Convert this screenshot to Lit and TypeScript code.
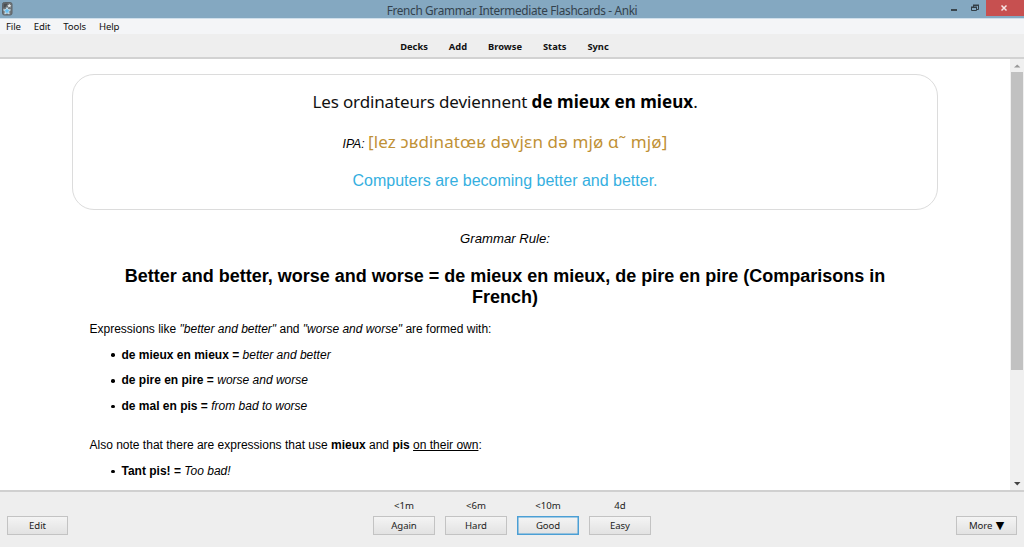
import { LitElement, html, css } from "lit";
import { customElement, property } from "lit/decorators.js";
import { classMap } from "lit/directives/class-map.js";

@customElement("window-titlebar")
class WindowTitlebar extends LitElement {
  static styles = css`
    :host { display: grid; grid-template-columns: 1fr auto 1fr; height: 18px; background: #84a8c1; border-bottom: 1px solid #cfdfeb; align-items: start; }
    .icon { margin: 2px 0 0 2px; display: block; }
    .title { font: 11.800px/20px "Noto Sans", sans-serif; color: #33424d; white-space: nowrap; letter-spacing: -0.330px; }
    .controls { display: flex; justify-content: flex-end; height: 16px; }
    .controls svg { display: block; }
    .close { background: #c75050; width: 38px; height: 16px; }
  `;
  render() {
    return html`
      <svg class="icon" width="11" height="14" viewBox="0 0 11 14">
        <rect x=".5" y=".5" width="9.500" height="12.500" rx="1.800" fill="#70767a" stroke="#5c6368"/>
        <path d="M1.500 1.500h4.500L3.500 5 1.500 6z" fill="#4a4f53"/>
        <path d="M7.300 1.700l.7 1.200 1.400.2-1 1 .2 1.300-1.300-.6-1.200.6.200-1.300-1-1 1.400-.2z" fill="#e1e5e7"/>
        <path d="M5 5.500l1.100 2.100 2.400.3-1.800 1.700.5 2.400L5 10.900 2.800 12l.5-2.400-1.800-1.700 2.400-.3z" fill="#66bdf0" stroke="#dbe8ef" stroke-width=".8"/>
      </svg>
      <span class="title">French Grammar Intermediate Flashcards - Anki</span>
      <div class="controls">
        <svg width="56" height="16" viewBox="0 0 56 16">
          <rect x="21" y="9" width="6" height="2" fill="#3a464e"/>
          <path d="M43.500 7V5.500h5v4H47" fill="none" stroke="#333f47"/>
          <path d="M41.500 7.500h5v3h-5z" fill="#84a8c1" stroke="#333f47"/>
          <path d="M41 7.300h6M43 5.300h6" stroke="#333f47" stroke-width="1.500"/>
        </svg>
        <div class="close">
          <svg width="38" height="16" viewBox="0 0 38 16"><path d="M15.500 5.500l5 5M20.500 5.500l-5 5" stroke="#f6e4e4" stroke-width="1.500"/></svg>
        </div>
      </div>`;
  }
}

@customElement("answer-button")
class AnswerButton extends LitElement {
  @property() label = "";
  @property() due = "";
  @property({ type: Boolean }) primary = false;
  @property({ type: Boolean }) arrow = false;
  static styles = css`
    :host { display: flex; flex-direction: column; width: 62px; font: 9.600px/14px "Noto Sans", sans-serif; color: #222; text-align: center; }
    .due { height: 17px; white-space: pre; }
    .button { box-sizing: border-box; width: 100%; height: 19px; border: 1px solid #c3c3c3; background: linear-gradient(#f4f4f4, #e2e2e2); font: inherit; line-height: 17px; padding: 0; color: inherit; letter-spacing: -0.100px; white-space: nowrap; }
    .primary { border-color: #4b9fd5; box-shadow: inset 0 0 0 0.500px #4b9fd5; }
    .arrow { font: 11px/12px "DejaVu Sans", sans-serif; color: #000; margin-left: 1px; }
  `;
  render() {
    return html`<span class="due">${this.due}</span>
      <button class=${classMap({ button: true, primary: this.primary })}>${this.label}${this.arrow ? html` <span class="arrow">▼</span>` : ""}</button>`;
  }
}

@customElement("app-root")
class AppRoot extends LitElement {
  static styles = css`
    :host { display: flex; flex-direction: column; width: 1024px; height: 547px; background: #fff; overflow: hidden; }
    .menu { display: flex; height: 15px; background: #f4f5f7; font: 9.600px/16px "Noto Sans", sans-serif; color: #111; padding-left: 6px; letter-spacing: -0.150px; }
    .menu span { margin-right: 13px; }
    .toolbar { display: flex; justify-content: center; box-sizing: border-box; height: 25px; background: #eee; border-bottom: 2px solid #d2d2d2; font: bold 9.300px/26px "Noto Sans", sans-serif; color: #111; gap: 21px; padding-right: 15px; }
    .body { display: flex; flex: 1; min-height: 0; }
    .page { flex: 1; overflow: hidden; font-family: "Liberation Sans", Arial, sans-serif; color: #000; }
    .scroll { width: 14px; background: #f0f0f0; display: flex; flex-direction: column; align-items: center; justify-content: space-between; }
    .scroll svg { display: block; flex: none; }
    .thumb { width: 12px; height: 298px; background: #c1c1c1; margin-bottom: auto; }
    .card { box-sizing: border-box; width: 866px; height: 136px; margin: 15px 0 0 72px; border: 1px solid #dcdcdc; border-radius: 22px; text-align: center; white-space: nowrap; }
    .card div { display: flex; justify-content: center; align-items: baseline; }
    .french { font: 17px/24px "Noto Sans", sans-serif; margin-top: 15px; white-space: pre; letter-spacing: -0.130px; color: #111; }
    .french b { letter-spacing: 0.050px; color: #000; }
    .ipa { font: 17px/24px "Noto Sans", sans-serif; margin-top: 16px; color: #bf9136; white-space: pre; letter-spacing: 0.130px; }
    .ipa i { font: italic 12.200px "Liberation Sans", sans-serif; color: #000; letter-spacing: 0; }
    .english { font-size: 16px; line-height: 22px; margin-top: 16px; color: #35afe0; }
    .rule { text-align: center; font: italic 13.150px/18px "Liberation Sans", sans-serif; margin: 20px 0 0; }
    h1 { font-size: 18px; line-height: 21px; margin: 18px 0 0; text-align: center; }
    p { font-size: 12px; line-height: 14px; margin: 14px 0 0 89.500px; white-space: nowrap; }
    ul { margin: 0 0 0 89px; padding: 0 0 0 22px; font-size: 12px; line-height: 14px; list-style: none; }
    li { margin-top: 11.700px; height: 14px; white-space: nowrap; display: flex; align-items: center; }
    li::before { content: ""; width: 3.500px; height: 3.500px; border-radius: 50%; background: #000; margin: 1px 7px 0 0; }
    li span { white-space: pre; }
    .also { margin-top: 25px; }
    .bottom { display: flex; justify-content: space-between; box-sizing: border-box; height: 57px; background: #eee; border-top: 2px solid #d0d0d0; padding: 7px 7px 0; }
    .answers { display: flex; gap: 10px; }
    .side { width: 61px; }
  `;
  render() {
    return html`
      <window-titlebar></window-titlebar>
      <nav class="menu">${["File", "Edit", "Tools", "Help"].map((t) => html`<span>${t}</span>`)}</nav>
      <nav class="toolbar">${["Decks", "Add", "Browse", "Stats", "Sync"].map((t) => html`<span>${t}</span>`)}</nav>
      <div class="body">
        <main class="page">
          <section class="card">
            <div class="french"><span>Les ordinateurs deviennent <b>de mieux en mieux</b>.</span></div>
            <div class="ipa"><i>IPA: </i><span>[lez ɔʁdinatœʁ dəvjɛn də mjø ɑ˜ mjø]</span></div>
            <div class="english"><span>Computers are becoming better and better.</span></div>
          </section>
          <div class="rule">Grammar Rule:</div>
          <h1>Better and better, worse and worse = de mieux en mieux, de pire en pire (Comparisons in<br>French)</h1>
          <p>Expressions like <i>"better and better"</i> and <i>"worse and worse"</i> are formed with:</p>
          <ul>
            <li><span><b>de mieux en mieux =</b> <i>better and better</i></span></li>
            <li><span><b>de pire en pire =</b> <i>worse and worse</i></span></li>
            <li><span><b>de mal en pis =</b> <i>from bad to worse</i></span></li>
          </ul>
          <p class="also">Also note that there are expressions that use <b>mieux</b> and <b>pis</b> <u>on their own</u>:</p>
          <ul><li><span><b>Tant pis! =</b> <i>Too bad!</i></span></li></ul>
        </main>
        <div class="scroll">
          <svg width="14" height="13" viewBox="0 0 14 13"><path d="M4 8.500L7.200 5.500l3.200 3z" fill="#999"/></svg>
          <div class="thumb"></div>
          <svg width="14" height="13" viewBox="0 0 14 13"><path d="M4 5h6.500L7.250 8.500z" fill="#444"/></svg>
        </div>
      </div>
      <footer class="bottom">
        <answer-button class="side" label="Edit"></answer-button>
        <div class="answers">
          <answer-button due="<1m" label="Again"></answer-button>
          <answer-button due="<6m" label="Hard"></answer-button>
          <answer-button due="<10m" label="Good" primary></answer-button>
          <answer-button due="4d" label="Easy"></answer-button>
        </div>
        <answer-button class="side" label="More" arrow></answer-button>
      </footer>`;
  }
}
